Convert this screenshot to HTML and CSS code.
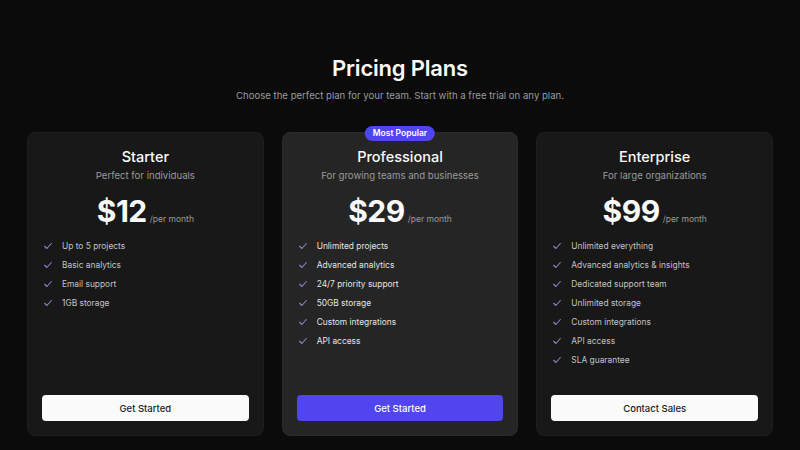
FILE: index.html
```html
<!DOCTYPE html>
<html lang="en">
<head>
<meta charset="utf-8">
<title>Pricing Plans</title>
<link rel="stylesheet" href="styles.css">
</head>
<body>
<main class="page">
  <header class="header">
    <h1 class="title">Pricing Plans</h1>
    <p class="subtitle">Choose the perfect plan for your team. Start with a free trial on any plan.</p>
  </header>
  <section class="plans">
    <article class="card">
      <h2 class="plan-name">Starter</h2>
      <p class="plan-desc">Perfect for individuals</p>
      <div class="price"><span class="amount">$12</span><span class="period">/per month</span></div>
      <ul class="features">
        <li><svg class="check" viewBox="0 0 12 12"><path d="M2 6.3 4.7 9 10 3"/></svg>Up to 5 projects</li>
        <li><svg class="check" viewBox="0 0 12 12"><path d="M2 6.3 4.7 9 10 3"/></svg>Basic analytics</li>
        <li><svg class="check" viewBox="0 0 12 12"><path d="M2 6.3 4.7 9 10 3"/></svg>Email support</li>
        <li><svg class="check" viewBox="0 0 12 12"><path d="M2 6.3 4.7 9 10 3"/></svg>1GB storage</li>
      </ul>
      <button class="btn btn-light">Get Started</button>
    </article>
    <article class="card card-featured">
      <span class="badge">Most Popular</span>
      <h2 class="plan-name">Professional</h2>
      <p class="plan-desc">For growing teams and businesses</p>
      <div class="price"><span class="amount">$29</span><span class="period">/per month</span></div>
      <ul class="features features-bright">
        <li><svg class="check" viewBox="0 0 12 12"><path d="M2 6.3 4.7 9 10 3"/></svg>Unlimited projects</li>
        <li><svg class="check" viewBox="0 0 12 12"><path d="M2 6.3 4.7 9 10 3"/></svg>Advanced analytics</li>
        <li><svg class="check" viewBox="0 0 12 12"><path d="M2 6.3 4.7 9 10 3"/></svg>24/7 priority support</li>
        <li><svg class="check" viewBox="0 0 12 12"><path d="M2 6.3 4.7 9 10 3"/></svg>50GB storage</li>
        <li><svg class="check" viewBox="0 0 12 12"><path d="M2 6.3 4.7 9 10 3"/></svg>Custom integrations</li>
        <li><svg class="check" viewBox="0 0 12 12"><path d="M2 6.3 4.7 9 10 3"/></svg>API access</li>
      </ul>
      <button class="btn btn-primary">Get Started</button>
    </article>
    <article class="card">
      <h2 class="plan-name">Enterprise</h2>
      <p class="plan-desc">For large organizations</p>
      <div class="price"><span class="amount">$99</span><span class="period">/per month</span></div>
      <ul class="features">
        <li><svg class="check" viewBox="0 0 12 12"><path d="M2 6.3 4.7 9 10 3"/></svg>Unlimited everything</li>
        <li><svg class="check" viewBox="0 0 12 12"><path d="M2 6.3 4.7 9 10 3"/></svg>Advanced analytics &amp; insights</li>
        <li><svg class="check" viewBox="0 0 12 12"><path d="M2 6.3 4.7 9 10 3"/></svg>Dedicated support team</li>
        <li><svg class="check" viewBox="0 0 12 12"><path d="M2 6.3 4.7 9 10 3"/></svg>Unlimited storage</li>
        <li><svg class="check" viewBox="0 0 12 12"><path d="M2 6.3 4.7 9 10 3"/></svg>Custom integrations</li>
        <li><svg class="check" viewBox="0 0 12 12"><path d="M2 6.3 4.7 9 10 3"/></svg>API access</li>
        <li><svg class="check" viewBox="0 0 12 12"><path d="M2 6.3 4.7 9 10 3"/></svg>SLA guarantee</li>
      </ul>
      <button class="btn btn-light">Contact Sales</button>
    </article>
  </section>
</main>
</body>
</html>
```
FILE: styles.css
```css
* { box-sizing: border-box; }
html, body { margin: 0; height: 100%; }
body {
  background: #0b0b0b;
  color: #fafafa;
  font-family: Inter, "Noto Sans", "Liberation Sans", sans-serif;
}
.page {
  width: 746px;
  margin: 0 auto;
  padding-top: 54px;
}
.header { text-align: center; }
.title {
  margin: 0;
  font-size: 22px;
  line-height: 28px;
  font-weight: 600;
  letter-spacing: -0.2px;
}
.subtitle {
  margin: 7px 0 0;
  font-size: 9.6px;
  line-height: 14px;
  color: #9a9a9a;
}
.plans {
  margin-top: 29px;
  display: grid;
  grid-template-columns: repeat(3, 1fr);
  gap: 18px;
}
.card {
  position: relative;
  height: 304px;
  background: #181818;
  border: 1px solid #1e1e1e;
  border-radius: 8px;
  padding: 15px 14px 14px;
  display: flex;
  flex-direction: column;
  align-items: center;
}
.card-featured { background: #252525; border-color: #2a2a2a; }
.badge {
  position: absolute;
  top: -7px;
  left: 50%;
  transform: translateX(-50%);
  background: #5045ef;
  color: #fff;
  font-size: 8.5px;
  font-weight: 600;
  line-height: 15px;
  padding: 0 8px;
  border-radius: 8px;
  white-space: nowrap;
}
.plan-name {
  margin: 0;
  font-size: 14.5px;
  line-height: 18px;
  font-weight: 500;
}
.plan-desc {
  margin: 3px 0 0;
  font-size: 9.6px;
  line-height: 14px;
  color: #9a9a9a;
}
.price {
  margin-top: 10px;
  display: flex;
  align-items: baseline;
  justify-content: center;
}
.amount {
  font-size: 30px;
  line-height: 36px;
  font-weight: 700;
  letter-spacing: -0.5px;
}
.period {
  font-size: 8.5px;
  color: #9a9a9a;
  margin-left: 3px;
}
.features {
  list-style: none;
  margin: 7px 0 0;
  padding: 0 0 0 1px;
  align-self: stretch;
}
.features li {
  display: flex;
  align-items: center;
  height: 19px;
  font-size: 8.4px;
  color: #c2c2c2;
}
.features-bright li { color: #e4e4e4; }
.check {
  width: 10px;
  height: 10px;
  margin-right: 9px;
  fill: none;
  stroke: #8a85c8;
  stroke-width: 1.3;
  stroke-linecap: round;
  stroke-linejoin: round;
}
.btn {
  margin-top: auto;
  align-self: stretch;
  height: 26px;
  border: 0;
  border-radius: 4px;
  font-family: inherit;
  font-size: 9.5px;
  font-weight: 500;
  cursor: pointer;
}
.btn-light { background: #fafafa; color: #222; }
.btn-primary { background: #5045ef; color: #fff; }
```
